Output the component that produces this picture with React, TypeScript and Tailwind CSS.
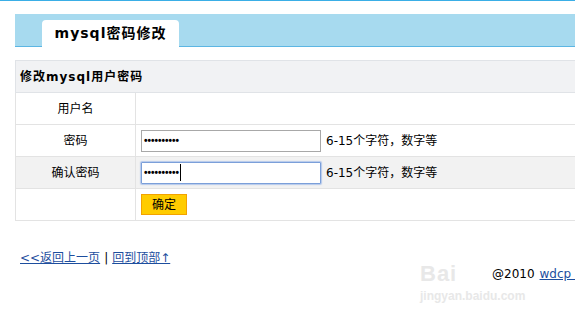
import React from "react";

const cjk = { fontFamily: '"DejaVu Sans", "Noto Sans CJK SC", sans-serif' };

export default function App() {
  return (
    <div className="relative w-[575px] h-[310px] overflow-hidden bg-white text-[12px] text-black" style={cjk}>
      <div className="h-px bg-[#3aaee6]" />
      <div className="ml-[15px] mt-[13px] w-[600px] h-[33px] bg-[#a7daef] border-b border-[#5cb6e3] flex items-end">
        <div className="ml-[27px] -mb-px w-[137px] h-[27px] bg-white rounded-t-[4px] flex items-center justify-center font-bold text-[14px] tracking-[1px] text-black">
          mysql密码修改
        </div>
      </div>

      <table className="ml-[15px] mt-[13px] w-[600px] border-collapse">
        <tbody>
          <tr className="h-[32px] bg-[#f1f2f4]">
            <td colSpan={2} className="border border-[#e0e3e7] pl-[4px] font-bold tracking-[1px]">修改mysql用户密码</td>
          </tr>
          <tr className="h-[32px]">
            <td className="w-[120px] border border-[#e3e3e3] text-center">用户名</td>
            <td className="border border-[#e3e3e3]"></td>
          </tr>
          <tr className="h-[32px]">
            <td className="border border-[#e3e3e3] text-center">密码</td>
            <td className="border border-[#e3e3e3] pl-[5px]">
              <div className="flex items-center">
                <div className="w-[180px] h-[22px] border border-[#a8a8a8] flex items-center pl-[2px] text-[10px] font-bold" style={{ fontFamily: '"Liberation Sans", sans-serif' }}>
                  ••••••••••
                </div>
                <span className="ml-[5px]">6-15个字符，数字等</span>
              </div>
            </td>
          </tr>
          <tr className="h-[32px] bg-[#f2f2f2]">
            <td className="border border-[#e3e3e3] text-center">确认密码</td>
            <td className="border border-[#e3e3e3] pl-[5px]">
              <div className="flex items-center">
                <div className="w-[180px] h-[22px] bg-white border border-[#7b9fd9] shadow-[0_0_1px_1px_rgba(120,160,230,0.5)] rounded-[1px] flex items-center pl-[2px] text-[10px] font-bold" style={{ fontFamily: '"Liberation Sans", sans-serif' }}>
                  ••••••••••
                  <span className="ml-px w-px h-[17px] bg-black" />
                </div>
                <span className="ml-[5px]">6-15个字符，数字等</span>
              </div>
            </td>
          </tr>
          <tr className="h-[32px]">
            <td className="border border-[#e3e3e3]"></td>
            <td className="border border-[#e3e3e3] pl-[5px]">
              <div className="w-[46px] h-[21px] bg-[#ffcc00] border border-[#f2a200] flex items-center justify-center">确定</div>
            </td>
          </tr>
        </tbody>
      </table>

      <div className="ml-[20px] mt-[29px] flex items-center h-[16px]">
        <a className="text-[#1d4e9e] underline">&lt;&lt;返回上一页</a>
        <span className="mx-[4px]">|</span>
        <a className="text-[#1d4e9e] underline">回到顶部↑</a>
      </div>
      <div className="ml-[492px] whitespace-nowrap h-[16px] flex items-center">
        <span>@2010</span>
        <a className="ml-[5px] text-[#1d4e9e] underline">wdcp v2</a>
      </div>

      <div className="absolute left-[420px] top-[250px] pointer-events-none text-[#e8e8e8]" style={{ fontFamily: '"Liberation Sans", sans-serif' }}>
        <div className="text-[22px] font-bold leading-[24px] tracking-[1px] mt-[12px]">Bai</div>
        <div className="text-[12px] font-bold leading-[14px] mt-[3px]">jingyan.baidu.com</div>
      </div>
    </div>
  );
}
